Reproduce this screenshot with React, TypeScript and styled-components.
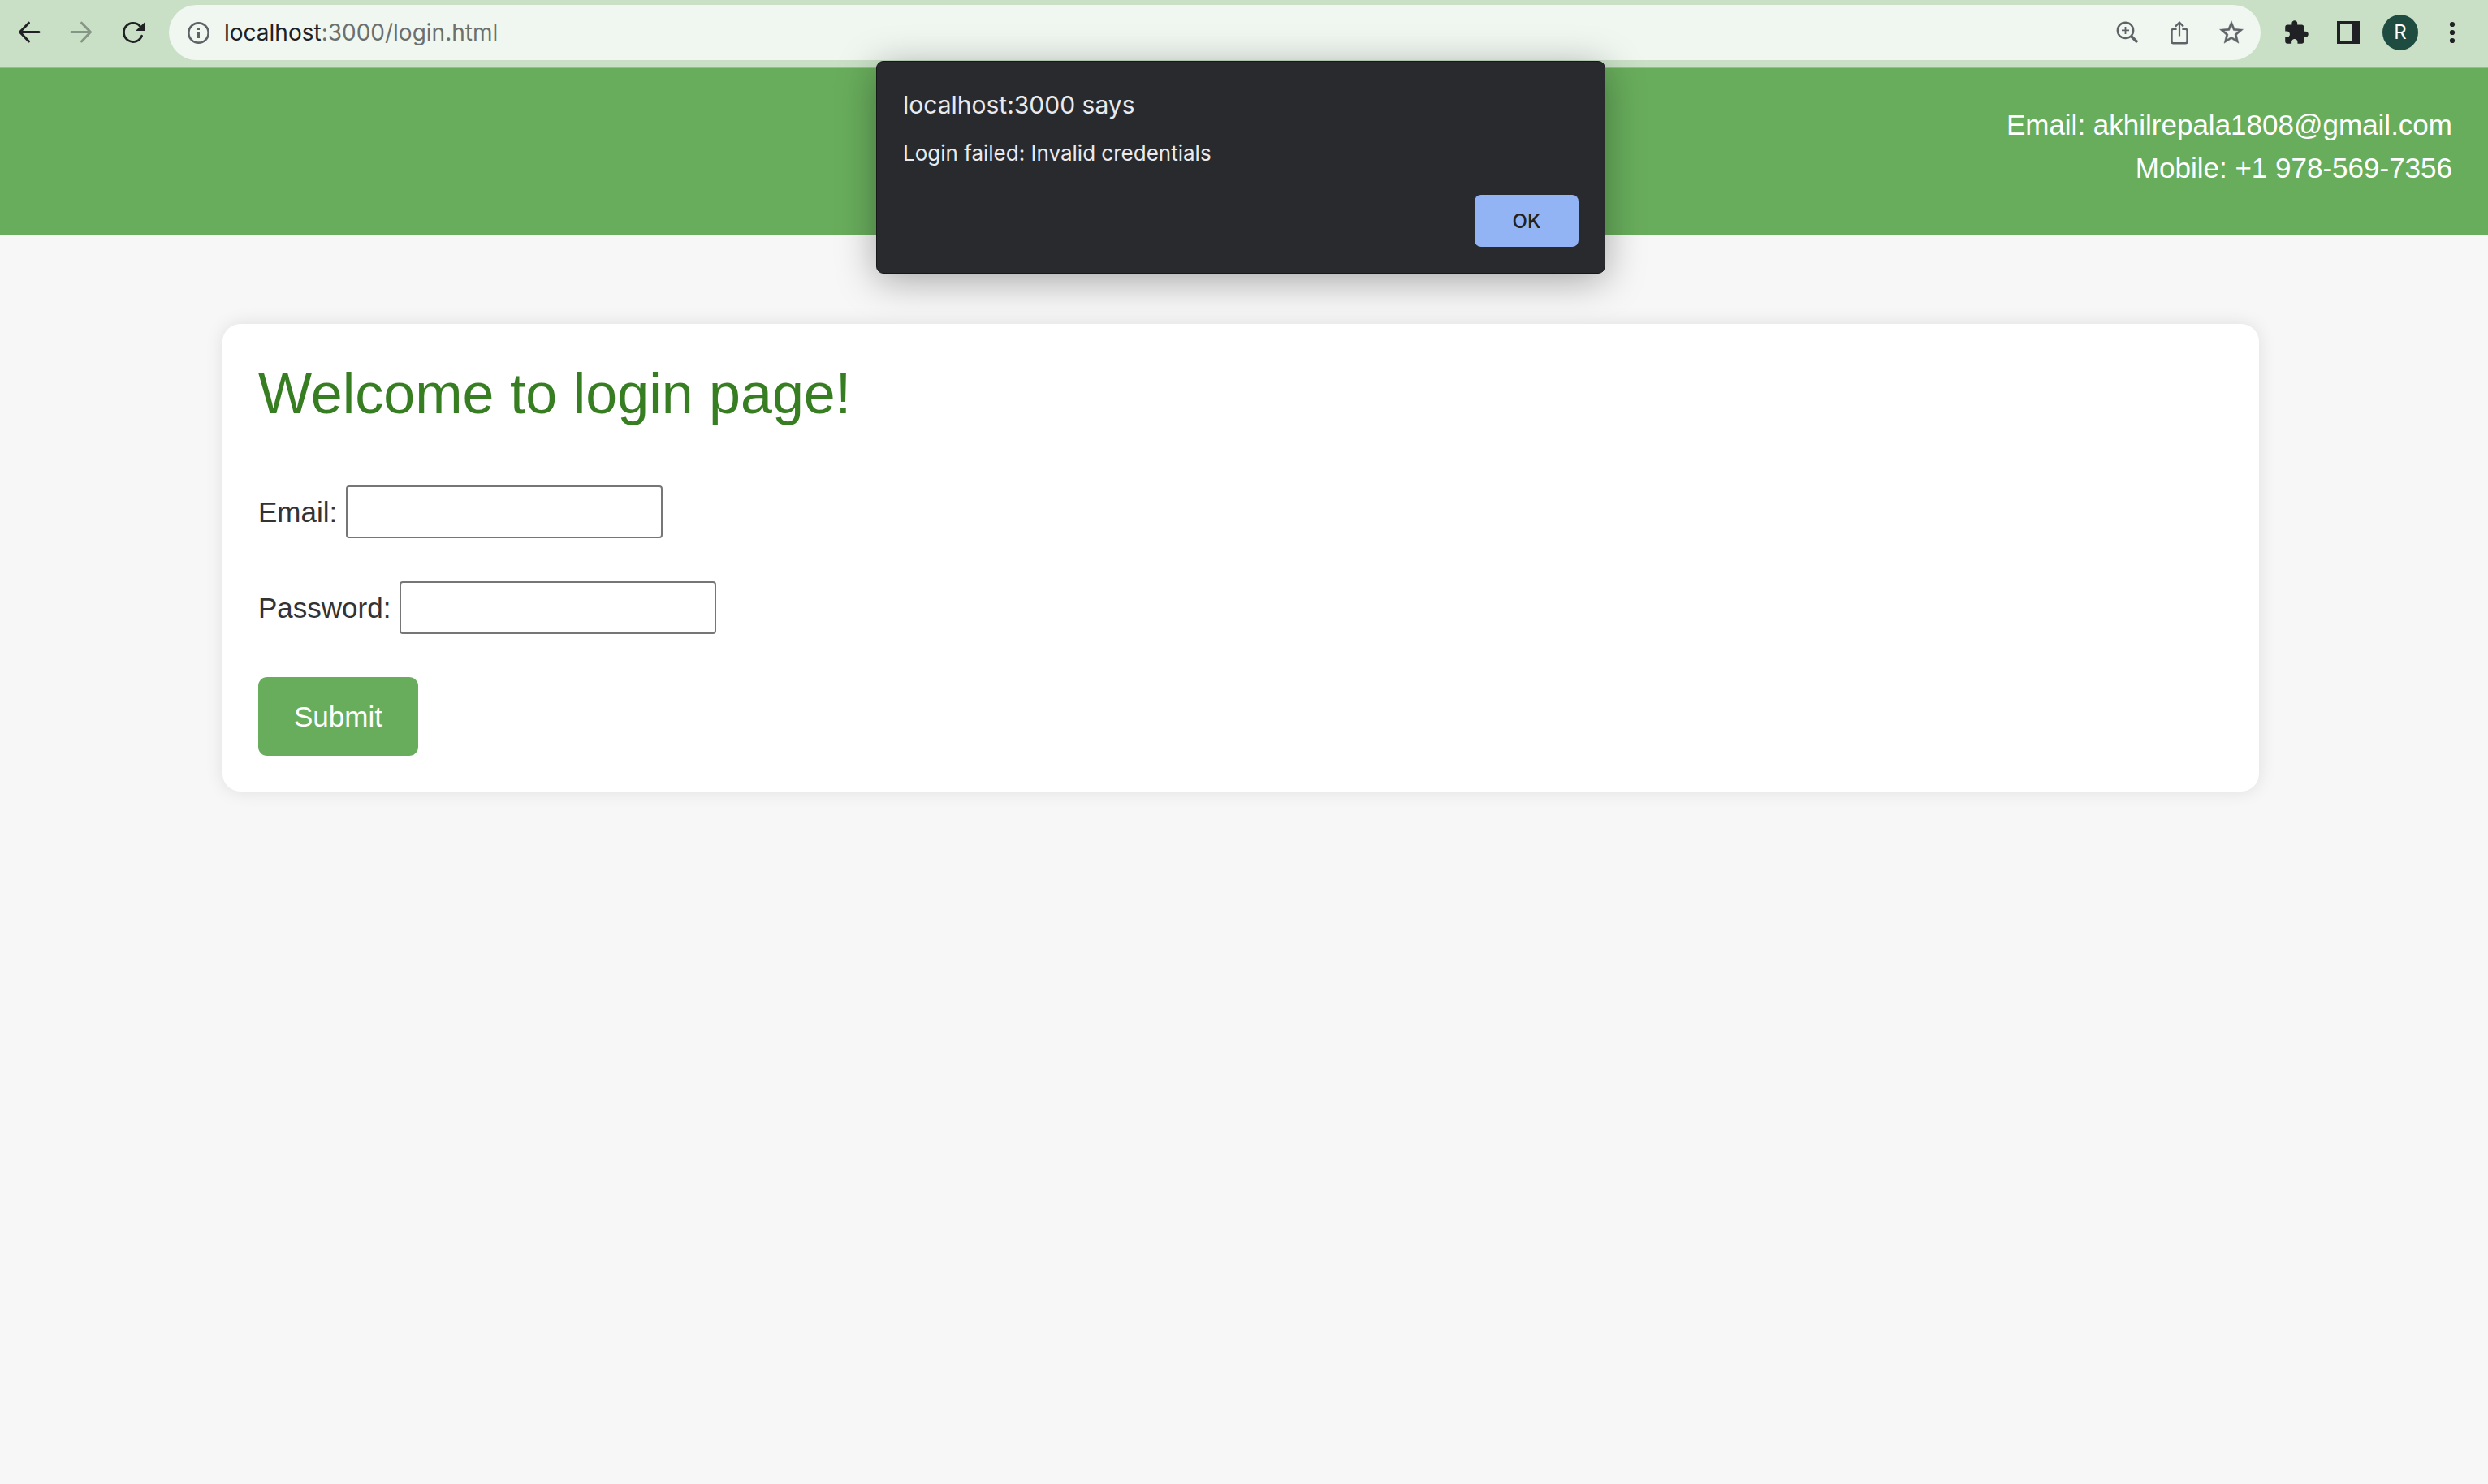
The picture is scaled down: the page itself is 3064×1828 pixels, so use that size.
import React from "react";
import styled, { createGlobalStyle } from "styled-components";

const GlobalStyle = createGlobalStyle`
  *, *::before, *::after {
    box-sizing: border-box;
  }
  body {
    margin: 0;
    background: #f7f7f7;
    color: #333333;
    font-family: "Liberation Sans", Arial, sans-serif;
    font-size: 35px;
    line-height: 53px;
  }
`;

const Window = styled.div`
  position: relative;
  min-height: 100vh;
`;

/* Browser toolbar */

const Toolbar = styled.div`
  display: flex;
  align-items: center;
  gap: 12px;
  padding: 6px 12px 8px 4px;
  background: #c9e0c6;
  border-bottom: 2px solid #a3b3a3;
  font-family: Inter, Roboto, sans-serif;
`;

const ToolGroup = styled.div`
  display: flex;
  align-items: center;
`;

const ToolButton = styled.button<{ $tone?: string }>`
  display: flex;
  align-items: center;
  justify-content: center;
  width: 64px;
  height: 64px;
  padding: 0;
  border: 0;
  background: none;
  color: ${(p) => p.$tone ?? "#202124"};
  font: inherit;
`;

const AddressBar = styled.div`
  display: flex;
  flex: 1;
  align-items: center;
  height: 68px;
  padding: 0 4px 0 22px;
  border-radius: 34px;
  background: #f0f7f0;
`;

const SiteInfo = styled.button`
  display: flex;
  padding: 0;
  border: 0;
  background: none;
  color: #5f6368;
`;

const Address = styled.div`
  flex: 1;
  padding-left: 16px;
  color: #6b706f;
  font-size: 28px;
  line-height: 36px;
`;

const Host = styled.span`
  color: #202124;
`;

const Avatar = styled.span`
  display: flex;
  align-items: center;
  justify-content: center;
  width: 44px;
  height: 44px;
  border-radius: 50%;
  background: #1f4c40;
  color: #ffffff;
  font-size: 24px;
  line-height: 24px;
`;

/* Page */

const Header = styled.header`
  padding: 43px 44px 56px;
  background: #68ad5c;
  color: #ffffff;
  text-align: right;
`;

const ContactLine = styled.p`
  margin: 0;
`;

const Main = styled.main`
  padding: 110px 8px 110px 0;
`;

const Card = styled.section`
  max-width: 2508px;
  margin: 0 auto;
  padding: 44px;
  border-radius: 22px;
  background: #ffffff;
  box-shadow: 0 0 22px rgba(0, 0, 0, 0.1);
`;

const Title = styled.h1`
  margin: 0 0 71px;
  color: #377e22;
  font-size: 70px;
  font-weight: 400;
  line-height: 84px;
`;

const LoginForm = styled.form`
  display: flex;
  flex-direction: column;
  align-items: flex-start;
  gap: 53px;
`;

const Field = styled.div`
  display: flex;
  align-items: center;
  gap: 11px;
`;

const TextInput = styled.input`
  width: 390px;
  height: 65px;
  padding: 4px;
  border: 2px solid #767676;
  border-radius: 4px;
  background: #ffffff;
  color: #333333;
  font: inherit;
`;

const SubmitButton = styled.button`
  padding: 22px 44px;
  border: 0;
  border-radius: 11px;
  background: #68ad5c;
  color: #ffffff;
  font: inherit;
`;

/* Alert */

const AlertLayer = styled.div`
  position: absolute;
  top: 75px;
  left: 0;
  right: 8px;
  display: flex;
  justify-content: center;
`;

const Alert = styled.div`
  display: flex;
  flex-direction: column;
  width: 898px;
  padding: 35px 32px 32px;
  border: 1px solid #161719;
  border-radius: 9px;
  background: #292a2d;
  box-shadow: 0 8px 48px rgba(0, 0, 0, 0.34);
  color: #e8eaed;
  font-family: Inter, Roboto, sans-serif;
`;

const AlertTitle = styled.h2`
  margin: 0 0 24px;
  font-size: 30px;
  font-weight: 400;
  line-height: 36px;
`;

const AlertMessage = styled.p`
  margin: 0 0 33px;
  font-size: 26px;
  line-height: 36px;
`;

const AlertButton = styled.button`
  align-self: flex-end;
  width: 128px;
  height: 64px;
  border: 0;
  border-radius: 8px;
  background: #93b4f4;
  color: #202124;
  font-family: inherit;
  font-size: 24px;
  font-weight: 500;
`;

const Icon = ({ width = 32, children }: { width?: number; children: React.ReactNode }) => (
  <svg width={width} height="32" viewBox={`0 0 ${width} 32`} fill="none" aria-hidden="true">
    {children}
  </svg>
);

const ArrowLeft = () => (
  <Icon>
    <path d="M28 15.5H4.5M15.5 4.2 4.5 15.5l11 11.5" stroke="currentColor" strokeWidth="3" strokeLinecap="round" strokeLinejoin="round" />
  </Icon>
);

const ArrowRight = () => (
  <Icon>
    <path d="M4 15.5h23.5M16.5 4.2l11 11.3-11 11.5" stroke="currentColor" strokeWidth="3" strokeLinecap="round" strokeLinejoin="round" />
  </Icon>
);

const Reload = () => (
  <Icon>
    <path d="M26.6 20.2A11.5 11.5 0 1 1 24.4 8.2" stroke="currentColor" strokeWidth="2.8" strokeLinecap="round" />
    <path d="M30 3.5V14H19z" fill="currentColor" />
  </Icon>
);

const Info = () => (
  <Icon width={30}>
    <circle cx="14.5" cy="16.5" r="12.2" stroke="currentColor" strokeWidth="2.7" />
    <path d="M13 10h3v3h-3zM13 15h3v8h-3z" fill="currentColor" />
  </Icon>
);

const ZoomIn = () => (
  <Icon>
    <circle cx="13.5" cy="13.4" r="9.7" stroke="currentColor" strokeWidth="2.4" />
    <path d="M9 13.4h9M13.5 9v9" stroke="currentColor" strokeWidth="1.8" />
    <path d="m20.5 20.5 7.6 7.6" stroke="currentColor" strokeWidth="3.6" />
  </Icon>
);

const Share = () => (
  <Icon>
    <path d="M12.6 11.9H8.5a2 2 0 0 0-2 2v13.3a2 2 0 0 0 2 2h15a2 2 0 0 0 2-2V13.9a2 2 0 0 0-2-2h-4.1" stroke="currentColor" strokeWidth="2.4" />
    <path d="M16 20.5V4M11 8.6l5-5 5 5" stroke="currentColor" strokeWidth="2.2" />
  </Icon>
);

const Star = () => (
  <Icon>
    <path
      transform="translate(-1.4 -1.2) scale(1.45)"
      d="M22 9.24l-7.19-.62L12 2 9.19 8.63 2 9.24l5.46 4.73L5.82 21 12 17.27 18.18 21l-1.63-7.03L22 9.24zM12 15.4l-3.76 2.27 1-4.28-3.32-2.88 4.38-.38L12 6.1l1.71 4.04 4.38.38-3.32 2.88 1 4.28L12 15.4z"
      fill="currentColor"
      stroke="currentColor"
      strokeWidth="0.3"
    />
  </Icon>
);

const Puzzle = () => (
  <Icon>
    <path
      transform="translate(-0.5 -0.2) scale(1.36)"
      d="M20.5 11H19V7c0-1.1-.9-2-2-2h-4V3.5C13 2.12 11.88 1 10.5 1S8 2.12 8 3.5V5H4c-1.1 0-1.99.9-1.99 2v3.8H3.5c1.49 0 2.7 1.21 2.7 2.7s-1.21 2.7-2.7 2.7H2V20c0 1.1.9 2 2 2h3.8v-1.5c0-1.49 1.21-2.7 2.7-2.7 1.49 0 2.7 1.21 2.7 2.7V22H17c1.1 0 2-.9 2-2v-4h1.5c1.38 0 2.5-1.12 2.5-2.5S21.88 11 20.5 11z"
      fill="currentColor"
    />
  </Icon>
);

const SidePanel = () => (
  <Icon>
    <path fillRule="evenodd" d="M2 2h28v28H2zM6 6v20h14V6z" fill="currentColor" />
  </Icon>
);

const Dots = () => (
  <Icon>
    <circle cx="16" cy="6" r="3.1" fill="currentColor" />
    <circle cx="16" cy="16" r="3.1" fill="currentColor" />
    <circle cx="16" cy="26" r="3.1" fill="currentColor" />
  </Icon>
);

export default function App() {
  return (
    <>
      <GlobalStyle />
      <Window>
        <Toolbar>
          <ToolGroup>
            <ToolButton aria-label="Back"><ArrowLeft /></ToolButton>
            <ToolButton aria-label="Forward" $tone="#869686"><ArrowRight /></ToolButton>
            <ToolButton aria-label="Reload"><Reload /></ToolButton>
          </ToolGroup>
          <AddressBar>
            <SiteInfo aria-label="Site information"><Info /></SiteInfo>
            <Address><Host>localhost</Host>:3000/login.html</Address>
            <ToolButton aria-label="Zoom" $tone="#5f6368"><ZoomIn /></ToolButton>
            <ToolButton aria-label="Share" $tone="#5f6368"><Share /></ToolButton>
            <ToolButton aria-label="Bookmark" $tone="#5f6368"><Star /></ToolButton>
          </AddressBar>
          <ToolGroup>
            <ToolButton aria-label="Extensions"><Puzzle /></ToolButton>
            <ToolButton aria-label="Side panel"><SidePanel /></ToolButton>
            <ToolButton aria-label="Profile"><Avatar>R</Avatar></ToolButton>
            <ToolButton aria-label="Menu"><Dots /></ToolButton>
          </ToolGroup>
        </Toolbar>

        <Header>
          <ContactLine>Email: akhilrepala1808@gmail.com</ContactLine>
          <ContactLine>Mobile: +1 978-569-7356</ContactLine>
        </Header>

        <Main>
          <Card>
            <Title>Welcome to login page!</Title>
            <LoginForm onSubmit={(e) => e.preventDefault()}>
              <Field>
                <label htmlFor="email">Email:</label>
                <TextInput id="email" type="email" />
              </Field>
              <Field>
                <label htmlFor="password">Password:</label>
                <TextInput id="password" type="password" />
              </Field>
              <SubmitButton type="submit">Submit</SubmitButton>
            </LoginForm>
          </Card>
        </Main>

        <AlertLayer>
          <Alert role="alertdialog" aria-labelledby="alert-title" aria-describedby="alert-message">
            <AlertTitle id="alert-title">localhost:3000 says</AlertTitle>
            <AlertMessage id="alert-message">Login failed: Invalid credentials</AlertMessage>
            <AlertButton type="button">OK</AlertButton>
          </Alert>
        </AlertLayer>
      </Window>
    </>
  );
}
